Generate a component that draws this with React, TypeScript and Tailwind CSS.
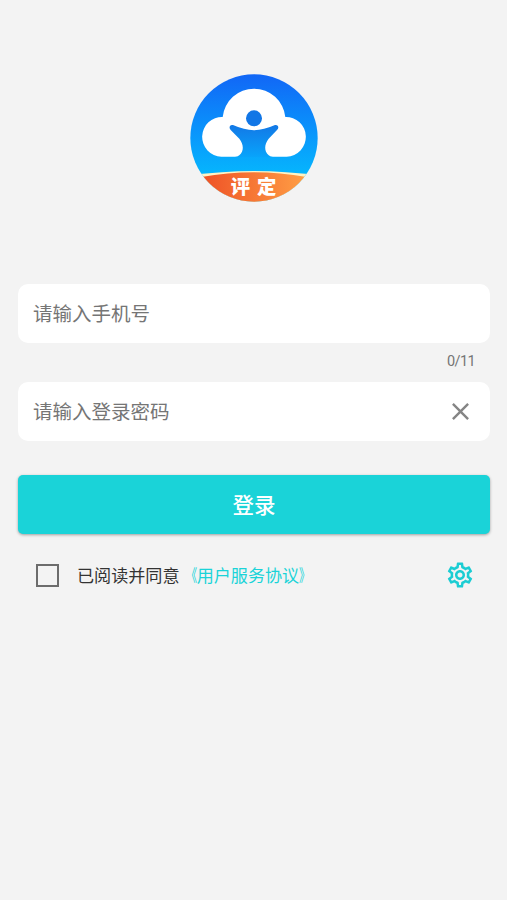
import { useState } from "react";
import { MdClose, MdOutlineSettings } from "react-icons/md";

const PHONE_LENGTH = 11;

function Logo() {
  return (
    <svg viewBox="30 26 384 384" className="h-32 w-32">
      <defs>
        <linearGradient id="sky" x1="0" y1="0" x2="0" y2="1">
          <stop offset="0" stopColor="#1266f6" />
          <stop offset="0.4" stopColor="#0a90fb" />
          <stop offset="0.78" stopColor="#06b5fd" />
        </linearGradient>
        <linearGradient id="body" x1="0" y1="0" x2="0" y2="1">
          <stop offset="0" stopColor="#1378e6" />
          <stop offset="1" stopColor="#08a4fb" />
        </linearGradient>
        <linearGradient id="band" x1="0" y1="0" x2="1" y2="0">
          <stop offset="0" stopColor="#ee5126" />
          <stop offset="1" stopColor="#ff9f45" />
        </linearGradient>
        <clipPath id="disc">
          <circle cx="222" cy="218" r="191" />
        </clipPath>
      </defs>
      <g clipPath="url(#disc)">
        <rect x="30" y="26" width="384" height="384" fill="url(#sky)" />
        <path d="M30 331 Q222 303 414 331 V410 H30 Z" fill="#fff3c4" />
        <path d="M64 335 Q222 307 380 335 V410 H64 Z" fill="url(#band)" />
      </g>
      {/* cloud */}
      <path
        d="M124 274 A59.500 59.500 0 1 1 128 155 A94.500 94.500 0 0 1 316 155 A59.500 59.500 0 1 1 320 274 Z"
        fill="#fff"
      />
      {/* person with raised arms */}
      <circle cx="222" cy="159" r="24" fill="#1176e6" />
      <path
        d="M161 180 Q192 194 222 195 Q252 194 283 180 C294 176 299 187 291 194 L266 220 C256 233 253 247 258 259 Q264 272 279 275 H165 Q180 272 186 259 C191 247 188 233 178 220 L152 194 C145 187 150 175 161 180 Z"
        fill="url(#body)"
      />
      <text
        x="152"
        y="385"
        fontSize="58"
        letterSpacing="21"
        fontWeight="900"
        fill="#fff"
        className="font-['Noto_Sans_CJK_SC',sans-serif]"
      >
        评定
      </text>
    </svg>
  );
}

export default function App() {
  const [phone, setPhone] = useState("");
  const [password, setPassword] = useState("");
  const [agreed, setAgreed] = useState(false);

  return (
    <div className="flex min-h-screen flex-col bg-[#f3f3f3] pt-[74px] pr-[17px] pl-[18px] font-[Roboto,'Noto_Sans_CJK_SC',sans-serif]">
      <div className="flex justify-center">
        <Logo />
      </div>

      <div className="mt-[82px] flex h-[59px] items-center rounded-[10px] bg-white px-[15px]">
        <input
          type="tel"
          value={phone}
          maxLength={PHONE_LENGTH}
          onChange={(e) => setPhone(e.target.value)}
          placeholder="请输入手机号"
          className="w-full min-w-0 pt-0.5 text-[19.5px] text-[#333] outline-none placeholder:text-[#757575]"
        />
      </div>
      <div className="flex h-[39px] items-center justify-end pr-[15px] pb-0.5 text-[14.5px] tracking-[-0.6px] text-[#757575]">
        {phone.length}/{PHONE_LENGTH}
      </div>

      <div className="flex h-[59px] items-center rounded-[10px] bg-white px-[15px]">
        <input
          type="password"
          value={password}
          onChange={(e) => setPassword(e.target.value)}
          placeholder="请输入登录密码"
          className="min-w-0 flex-1 pt-0.5 text-[19.5px] text-[#333] outline-none placeholder:text-[#757575]"
        />
        <button type="button" aria-label="清除" onClick={() => setPassword("")}>
          <MdClose className="h-[29px] w-[29px] text-[#858585]" />
        </button>
      </div>

      <button
        type="button"
        className="mt-[34px] h-[59px] rounded-[5px] bg-[#1ad3d8] pt-[3px] text-[21.5px] font-medium text-white shadow-[0_1px_3px_rgba(0,0,0,0.35)]"
      >
        登录
      </button>

      <div className="mt-[26px] flex h-[30px] items-center pr-[15px] pl-[18px]">
        <button
          type="button"
          role="checkbox"
          aria-checked={agreed}
          aria-label="已阅读并同意"
          onClick={() => setAgreed(!agreed)}
          className={`h-[23px] w-[23px] border-2 border-[#6c6c6c] ${agreed ? "bg-[#1ad3d8]" : ""}`}
        />
        <p className="ml-[18px] flex-1 pt-[3px] text-[17.1px] text-[#333]">
          已阅读并同意
          <a className="text-[#1ad3d8]">
            <span className="inline-block origin-right scale-x-[0.65]">《</span>
            用户服务协议
            <span className="inline-block origin-left scale-x-[0.65]">》</span>
          </a>
        </p>
        <MdOutlineSettings className="h-[30px] w-[30px] text-[#1bcdd3]" />
      </div>
    </div>
  );
}
